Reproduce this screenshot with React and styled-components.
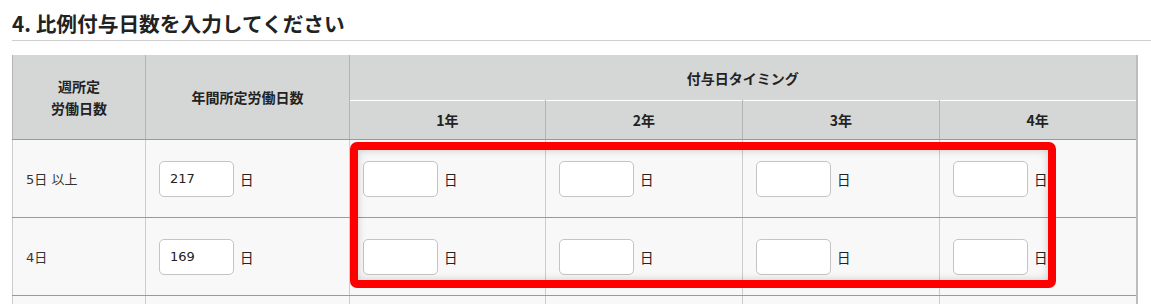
import React from "react";
import styled, { createGlobalStyle } from "styled-components";

const Global = createGlobalStyle`
  html, body { margin: 0; padding: 0; background: #fff; }
  body {
    font-family: "DejaVu Sans", "Noto Sans CJK JP", sans-serif;
    color: #222;
    overflow: hidden;
  }
`;

const Page = styled.div`
  padding: 8px 0 0 12px;
`;

const Title = styled.h2`
  margin: 0;
  font-family: "Noto Sans CJK JP", sans-serif;
  font-size: 20.7px;
  font-weight: bold;
  line-height: 30px;
  color: #222;
  padding-bottom: 2px;
  border-bottom: 1px solid #cfcfcf;
`;

const Wrap = styled.div`
  position: relative;
  margin-top: 14px;
  width: 1126px;
`;

const Table = styled.table`
  border-collapse: collapse;
  table-layout: fixed;
  width: 1124px;
  border-left: 1px solid #c8c8c8;
  border-right: 2px solid #bdbdbd;
`;

const Th = styled.th`
  background: #d5d7d6;
  font-family: "Noto Sans CJK JP", sans-serif;
  font-size: 14px;
  font-weight: bold;
  color: #222;
  line-height: 22px;
  text-align: center;
  padding: 0;
  height: ${(p) => p.$h || 39}px;
  border-left: 1px solid #b4b4b4;
  border-right: 1px solid #b4b4b4;
  border-top: ${(p) => (p.$white ? "1px solid #fff" : "none")};
  border-bottom: ${(p) => (p.$last ? "1px solid #9a9a9a" : "none")};
`;

const Td = styled.td`
  background: #f8f8f8;
  height: 77px;
  padding: 0 0 0 13px;
  border-left: 1px solid #cccccc;
  border-right: 1px solid #cccccc;
  border-bottom: 1px solid #9a9a9a;
  font-size: 13px;
  color: #333;
  vertical-align: middle;
`;

const Label = styled.span`
  font-family: "DejaVu Sans", "Noto Sans CJK JP", sans-serif;
  font-size: 13px;
  color: #333;
`;

const Field = styled.div`
  display: flex;
  align-items: center;
  gap: 6px;
`;

const Input = styled.input`
  box-sizing: border-box;
  width: 75px;
  height: 36px;
  border: 1px solid #c4c4c4;
  border-radius: 5px;
  background: #fff;
  padding: 0 10px;
  font-family: "DejaVu Sans", sans-serif;
  font-size: 13px;
  color: #222;
  outline: none;
`;

const Unit = styled.span`
  font-family: "Noto Sans CJK JP", sans-serif;
  font-size: 13.5px;
  color: #222;
`;

const Highlight = styled.div`
  position: absolute;
  left: 338px;
  top: 87px;
  width: 706px;
  height: 146px;
  box-sizing: border-box;
  border: 8px solid #ff0000;
  border-radius: 7px;
  box-shadow: inset 0 0 9px rgba(0, 0, 0, 0.18);
  pointer-events: none;
`;

const rows = [
  { label: "5日 以上", days: "217" },
  { label: "4日", days: "169" },
];

export default function App() {
  return (
    <>
      <Global />
      <Page>
        <Title>4. 比例付与日数を入力してください</Title>
        <Wrap>
          <Table>
            <colgroup>
              <col style={{ width: 133 }} />
              <col style={{ width: 204 }} />
              <col style={{ width: 196 }} />
              <col style={{ width: 197 }} />
              <col style={{ width: 197 }} />
              <col style={{ width: 197 }} />
            </colgroup>
            <thead>
              <tr>
                <Th rowSpan={2} $h={45} $last>
                  週所定
                  <br />
                  労働日数
                </Th>
                <Th rowSpan={2} $h={45} $last>
                  年間所定労働日数
                </Th>
                <Th colSpan={4} $h={45}>
                  付与日タイミング
                </Th>
              </tr>
              <tr>
                {["1年", "2年", "3年", "4年"].map((y) => (
                  <Th key={y} $h={38} $white $last>
                    {y}
                  </Th>
                ))}
              </tr>
            </thead>
            <tbody>
              {rows.map((r) => (
                <tr key={r.label}>
                  <Td>
                    <Label>{r.label}</Label>
                  </Td>
                  <Td>
                    <Field>
                      <Input defaultValue={r.days} />
                      <Unit>日</Unit>
                    </Field>
                  </Td>
                  {[0, 1, 2, 3].map((i) => (
                    <Td key={i}>
                      <Field>
                        <Input />
                        <Unit>日</Unit>
                      </Field>
                    </Td>
                  ))}
                </tr>
              ))}
              <tr>
                {[0, 1, 2, 3, 4, 5].map((i) => (
                  <Td key={i} />
                ))}
              </tr>
            </tbody>
          </Table>
          <Highlight />
        </Wrap>
      </Page>
    </>
  );
}
